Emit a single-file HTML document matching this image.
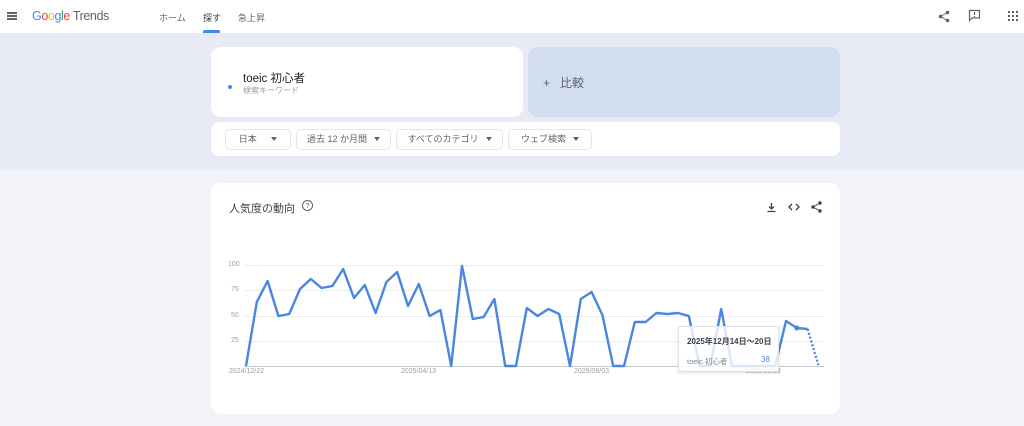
<!DOCTYPE html>
<html><head><meta charset="utf-8"><style>
*{margin:0;padding:0;box-sizing:border-box}
body{width:1024px;height:426px;overflow:hidden;background:#f2f3f9;font-family:"Liberation Sans","Noto Sans CJK JP",sans-serif;position:relative;color:#202124}
.abs{position:absolute}
.hdr{left:0;top:0;width:1024px;height:33px;background:#fff}
.band{left:0;top:33px;width:1024px;height:137px;background:#e8eaf6}
.card{background:#fff;border-radius:10px}
.chip{position:absolute;top:7px;height:21px;border:1px solid #e3e5ea;border-radius:5px;font-size:9px;color:#5f6368;line-height:19px;text-align:center}
.tri{display:inline-block;width:0;height:0;border-left:3px solid transparent;border-right:3px solid transparent;border-top:4px solid #5f6368;margin-left:7px;vertical-align:1px}
.yl{position:absolute;left:228px;font-size:7px;color:#9aa0a6}
.gl{position:absolute;left:244px;width:580px;height:1px;background:#eceef1}
</style></head><body>
<div class="abs hdr"></div>
<div class="abs" style="left:7px;top:12px;width:10px;height:1.5px;background:#5f6368;box-shadow:0 3px 0 #5f6368,0 6px 0 #5f6368"></div>
<div class="abs" style="left:32px;top:9px;font-size:12.5px;letter-spacing:-0.4px"><span style="color:#4285f4">G</span><span style="color:#ea4335">o</span><span style="color:#fbbc05">o</span><span style="color:#4285f4">g</span><span style="color:#34a853">l</span><span style="color:#ea4335">e</span><span style="color:#5f6368"> Trends</span></div>
<div class="abs" style="left:159px;top:11px;font-size:9px;color:#5f6368">ホーム</div>
<div class="abs" style="left:203px;top:11px;font-size:9px;color:#3c4043">探す</div>
<div class="abs" style="left:203px;top:30px;width:17px;height:3px;background:#4285f4;border-radius:2px 2px 0 0"></div>
<div class="abs" style="left:238px;top:11px;font-size:9px;color:#5f6368">急上昇</div>
<svg class="abs" style="left:938px;top:10px" width="12" height="13" viewBox="0 0 12 13"><g fill="#5f6368"><circle cx="9.5" cy="2.5" r="1.8"/><circle cx="2.5" cy="6.5" r="1.8"/><circle cx="9.5" cy="10.5" r="1.8"/></g><path d="M9.5 2.5L2.5 6.5L9.5 10.5" stroke="#5f6368" stroke-width="1" fill="none"/></svg>
<svg class="abs" style="left:968px;top:9px" width="13" height="13" viewBox="0 0 13 13"><path d="M1.5 1.5h10v7.5h-7.5l-2.5 2.5z" fill="none" stroke="#5f6368" stroke-width="1.2"/><rect x="6" y="3" width="1" height="3" fill="#5f6368"/><rect x="6" y="7" width="1" height="1" fill="#5f6368"/></svg>
<svg class="abs" style="left:1008px;top:11px" width="10" height="10" viewBox="0 0 10 10"><g fill="#5f6368"><rect x="0" y="0" width="2" height="2"/><rect x="4" y="0" width="2" height="2"/><rect x="8" y="0" width="2" height="2"/><rect x="0" y="4" width="2" height="2"/><rect x="4" y="4" width="2" height="2"/><rect x="8" y="4" width="2" height="2"/><rect x="0" y="8" width="2" height="2"/><rect x="4" y="8" width="2" height="2"/><rect x="8" y="8" width="2" height="2"/></g></svg>
<div class="abs band"></div>
<div class="abs card" style="left:211px;top:47px;width:312px;height:70px"></div>
<div class="abs" style="left:228px;top:85px;width:4px;height:4px;border-radius:50%;background:#4285f4"></div>
<div class="abs" style="left:243px;top:70px;font-size:11.5px;color:#202124">toeic 初心者</div>
<div class="abs" style="left:243px;top:85px;font-size:8px;color:#9aa0a6">検索キーワード</div>
<div class="abs" style="left:528px;top:47px;width:312px;height:70px;background:#d3ddf0;border-radius:10px"></div>
<div class="abs" style="left:543px;top:74px;font-size:12px;color:#5f6368">+&nbsp;&nbsp; 比較</div>
<div class="abs card" style="left:211px;top:122px;width:629px;height:34px;border-radius:8px">
<div class="chip" style="left:14px;width:66px">日本 &nbsp;&nbsp;<span class="tri"></span></div>
<div class="chip" style="left:85px;width:95px">過去 12 か月間<span class="tri"></span></div>
<div class="chip" style="left:185px;width:107px">すべてのカテゴリ<span class="tri"></span></div>
<div class="chip" style="left:297px;width:84px">ウェブ検索<span class="tri"></span></div>
</div>
<div class="abs card" style="left:211px;top:183px;width:629px;height:231px"></div>
<div class="abs" style="left:229px;top:200px;font-size:11px;color:#3c4043">人気度の動向</div>
<div class="abs" style="left:302px;top:200px;width:11px;height:11px;border:1px solid #5f6368;border-radius:50%;font-size:7.5px;line-height:9px;text-align:center;color:#5f6368">?</div>
<svg class="abs" style="left:766px;top:202px" width="11" height="11" viewBox="0 0 11 11"><path d="M5.5 1v6M3 4.5l2.5 2.5 2.5-2.5M1.5 9.5h8" stroke="#3c4043" stroke-width="1.3" fill="none"/></svg>
<svg class="abs" style="left:788px;top:202px" width="12" height="10" viewBox="0 0 12 10"><path d="M4 2L1 5l3 3M8 2l3 3-3 3" stroke="#3c4043" stroke-width="1.3" fill="none"/></svg>
<svg class="abs" style="left:811px;top:201px" width="11" height="12" viewBox="0 0 11 12"><g fill="#3c4043"><circle cx="9" cy="2" r="1.7"/><circle cx="2" cy="6" r="1.7"/><circle cx="9" cy="10" r="1.7"/></g><path d="M9 2L2 6l7 4" stroke="#3c4043" stroke-width="1" fill="none"/></svg>
<div class="gl" style="top:265px"></div><div class="gl" style="top:290px"></div><div class="gl" style="top:316px"></div><div class="gl" style="top:341px"></div>
<div class="gl" style="top:366px;background:#c6c9ce"></div>
<div class="yl" style="top:261px">100</div><div class="yl" style="top:286px;left:231px">75</div><div class="yl" style="top:312px;left:231px">50</div><div class="yl" style="top:337px;left:231px">25</div>
<div class="yl" style="top:368px;left:229px">2024/12/22</div>
<div class="yl" style="top:368px;left:401px">2025/04/13</div>
<div class="yl" style="top:368px;left:574px">2025/08/03</div>
<div class="yl" style="top:368px;left:746px">2025/11/23</div>
<svg class="abs" style="left:0;top:0" width="1024" height="426">
<polyline fill="none" stroke="#4a86e0" stroke-width="2.4" stroke-linejoin="round" points="246,366 256.8,302 267.6,281 278.4,316 289.2,314 300,289 310.8,279 321.6,288 332.4,286 343.2,269 354,298 364.8,285 375.6,313 386.4,282 397.2,272 408,306 418.8,284 429.6,316 440.4,310 451.2,366 462,266 472.8,319 483.6,317 494.4,299 505.2,366 516,366 526.8,308 537.6,316 548.4,309 559.2,314 570,366 580.8,299 591.6,292 602.4,315 613.2,366 624,366 634.8,322 645.6,322 656.4,313 667.2,314 678,313 688.8,316 699.6,366 710.4,366 721.2,309 732,366 742.8,366 753.6,366 764.4,366 775.2,366 786,321 796.8,328 807.6,329"/>
<polyline fill="none" stroke="#4a86e0" stroke-width="2.4" stroke-dasharray="2,2" points="807.6,329 818.4,365"/>
<circle cx="796.8" cy="328" r="2.5" fill="#4a86e0"/>
</svg>
<div class="abs" style="left:678px;top:326px;width:101px;height:46px;background:rgba(255,255,255,0.8);border:1px solid #e0e2e6;box-shadow:0 1px 3px rgba(0,0,0,.12)"></div>
<div class="abs" style="left:687px;top:336px;font-size:8px;font-weight:bold;color:#3c4043">2025年12月14日～20日</div>
<div class="abs" style="left:687px;top:356px;font-size:7.5px;color:#80868b">toeic 初心者</div>
<div class="abs" style="left:761px;top:355px;font-size:8px;color:#4a86e0">38</div>
</body></html>
